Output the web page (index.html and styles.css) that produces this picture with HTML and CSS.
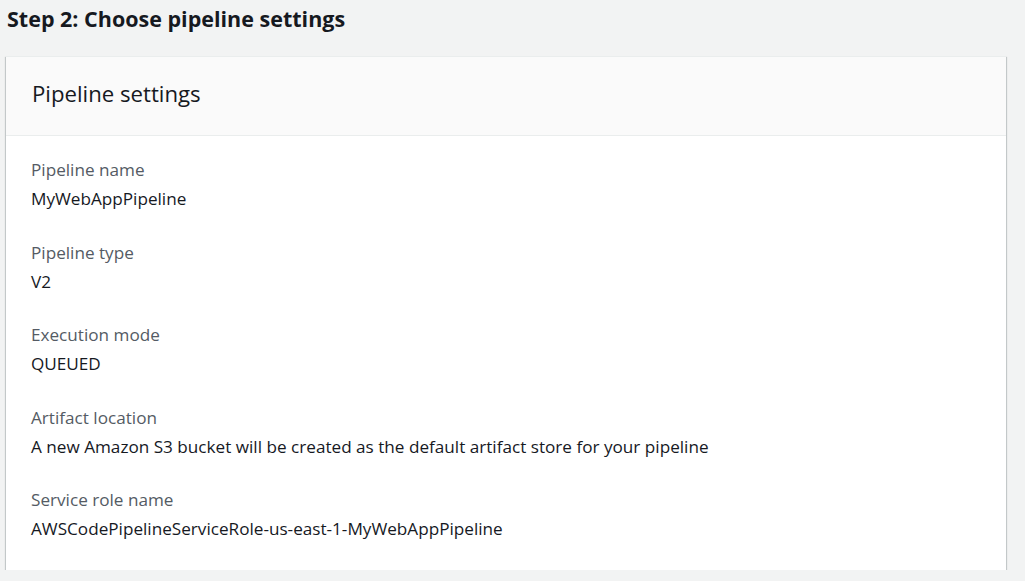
FILE: index.html
```html
<!DOCTYPE html>
<html lang="en">
<head>
<meta charset="utf-8">
<title>Step 2: Choose pipeline settings</title>
<link rel="stylesheet" href="styles.css">
</head>
<body>
<main class="page">
  <h1 class="step-title">Step 2: Choose pipeline settings</h1>
  <section class="card">
    <header class="card-header">
      <h2 class="card-title">Pipeline settings</h2>
    </header>
    <div class="card-body">
      <div class="field">
        <div class="field-label">Pipeline name</div>
        <div class="field-value">MyWebAppPipeline</div>
      </div>
      <div class="field">
        <div class="field-label">Pipeline type</div>
        <div class="field-value">V2</div>
      </div>
      <div class="field">
        <div class="field-label">Execution mode</div>
        <div class="field-value">QUEUED</div>
      </div>
      <div class="field">
        <div class="field-label">Artifact location</div>
        <div class="field-value">A new Amazon S3 bucket will be created as the default artifact store for your pipeline</div>
      </div>
      <div class="field">
        <div class="field-label">Service role name</div>
        <div class="field-value">AWSCodePipelineServiceRole-us-east-1-MyWebAppPipeline</div>
      </div>
    </div>
  </section>
</main>
</body>
</html>
```

FILE: styles.css
```css
html, body {
  margin: 0;
  padding: 0;
  background: #f2f3f3;
  font-family: "Open Sans", "Noto Sans", sans-serif;
  color: #16191f;
}

.page {
  padding: 5px 19px 0 6px;
}

.step-title {
  margin: 0 0 0 1px;
  font-size: 21.5px;
  line-height: 28px;
  font-weight: 700;
  color: #16191f;
}

.card {
  margin-top: 23px;
  background: #ffffff;
  box-shadow: 0 1px 1px 0 rgba(0, 28, 36, 0.3), 1px 1px 1px 0 rgba(0, 28, 36, 0.15), -1px 1px 1px 0 rgba(0, 28, 36, 0.15);
  border-top: 1px solid #eaeded;
}

.card-header {
  background: #fafafa;
  border-bottom: 1px solid #eaeded;
  padding: 0 26px 5px;
  height: 73px;
  display: flex;
  align-items: center;
}

.card-title {
  margin: 0;
  font-size: 22.2px;
  line-height: 28px;
  font-weight: 400;
  color: #16191f;
}

.card-body {
  padding: 23px 25px 30px;
  display: flex;
  flex-direction: column;
  gap: 31.5px;
}

.field {
  display: flex;
  flex-direction: column;
  gap: 7px;
}

.field-label {
  font-size: 17.15px;
  line-height: 22px;
  color: #545b64;
}

.field-value {
  font-size: 17.15px;
  line-height: 22px;
  color: #16191f;
}
```
